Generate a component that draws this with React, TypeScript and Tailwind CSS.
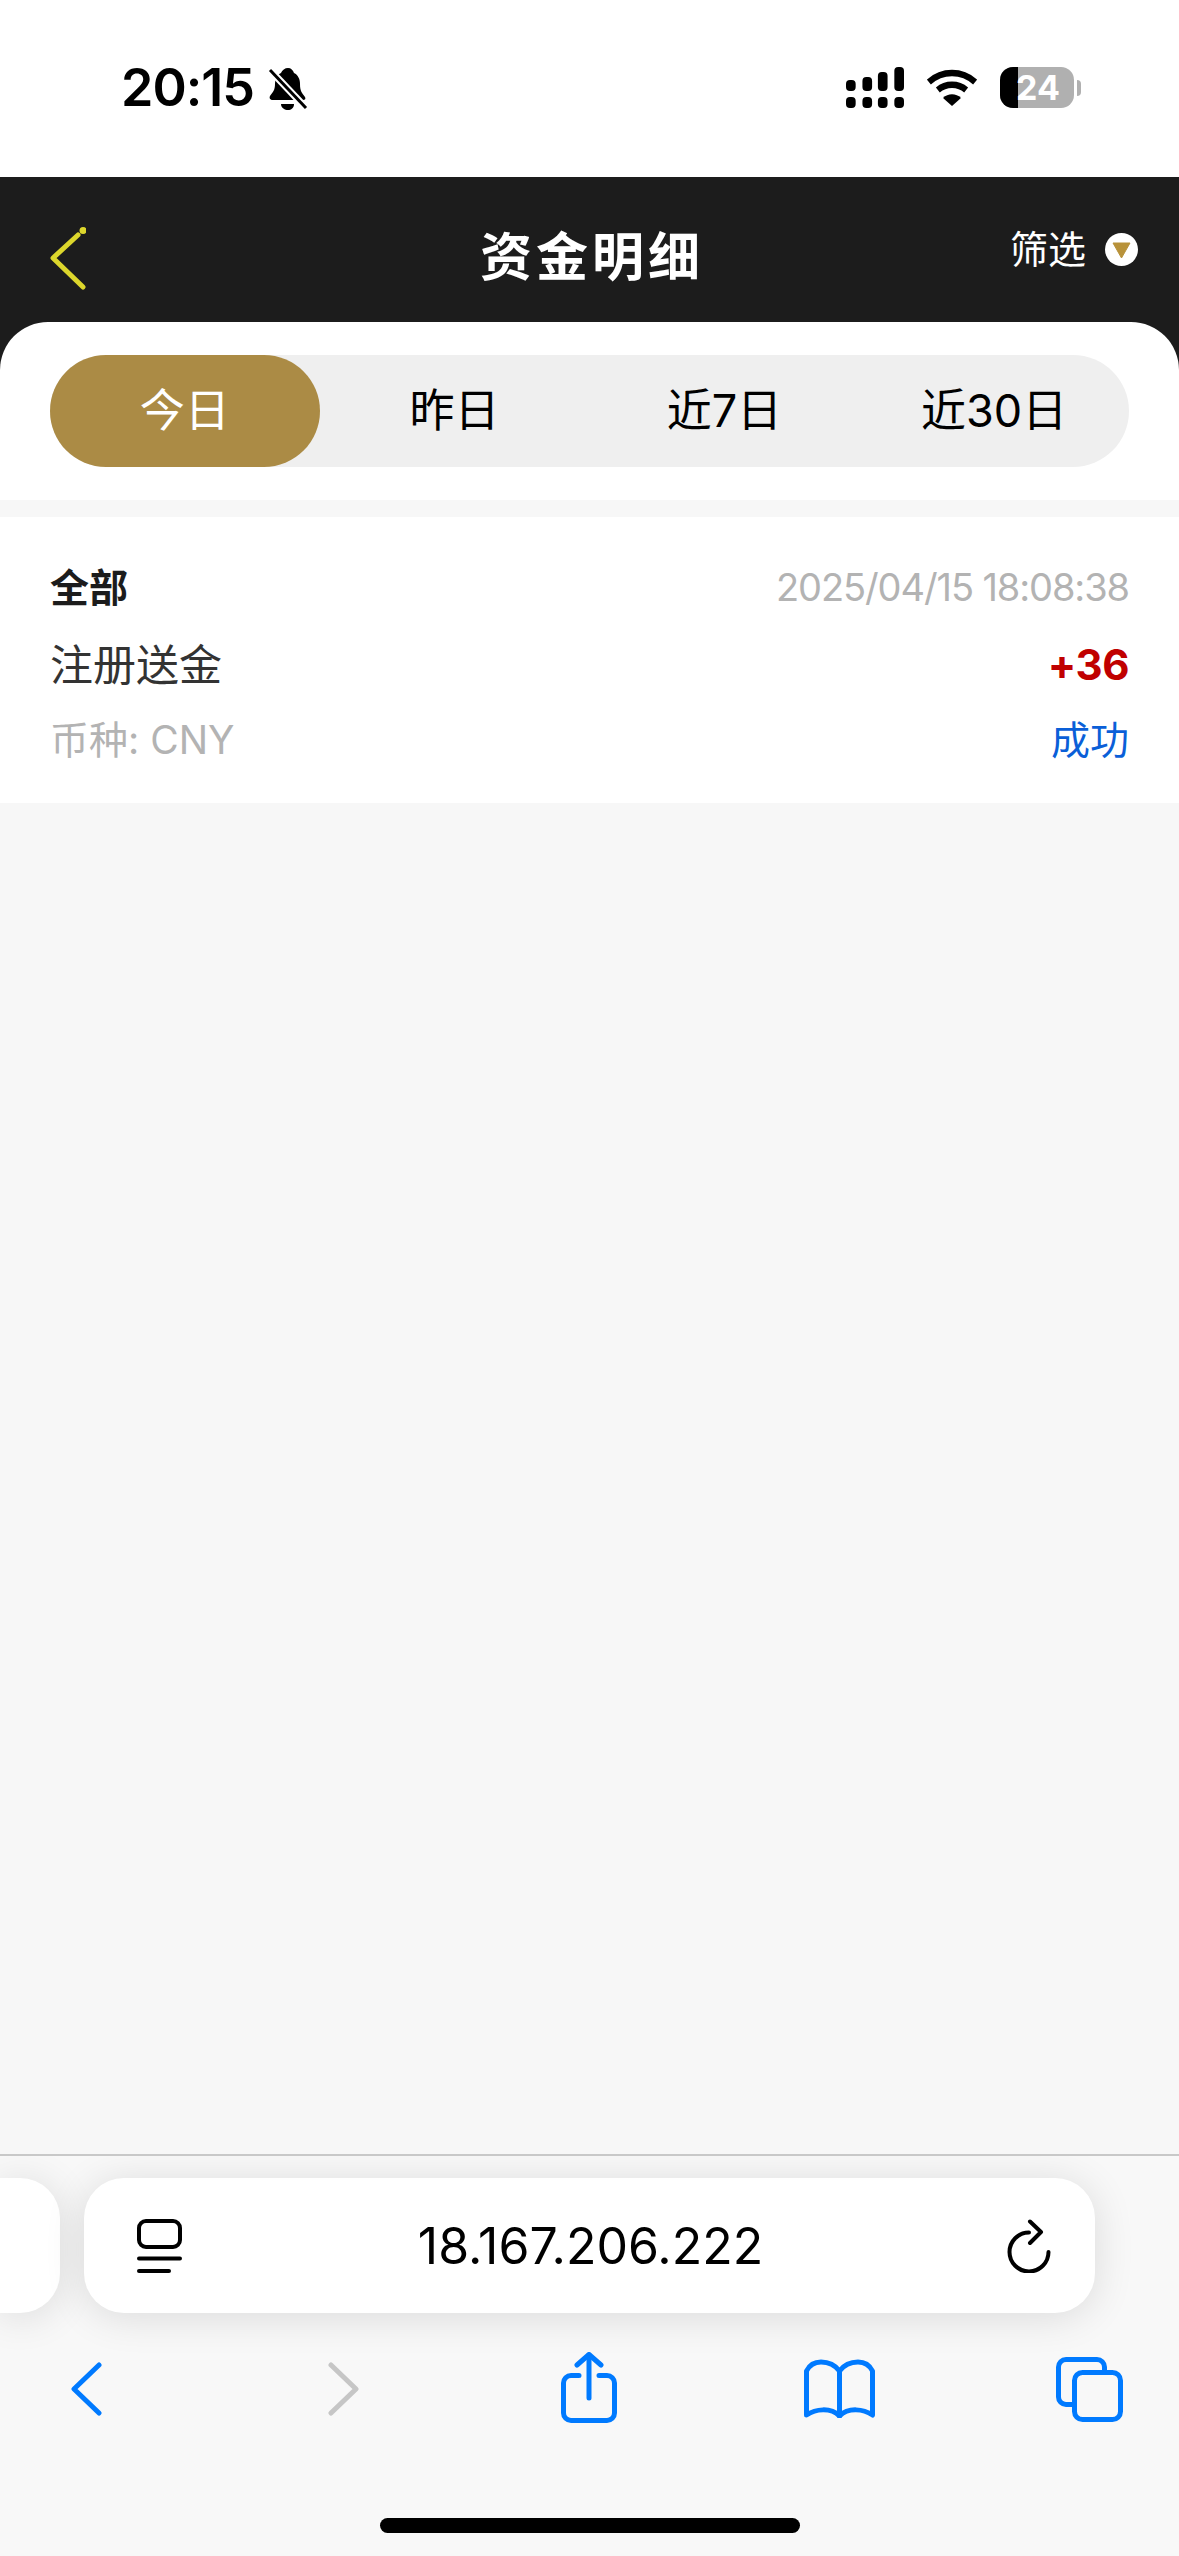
const tabs = ['今日', '昨日', '近7日', '近30日']

function StatusBar() {
  return (
    <div className="flex h-[177px] items-start justify-between bg-white pt-[60px] pl-[121px] pr-[98px]">
      <div className="flex items-center gap-[14px]">
        <span className="text-[52px] leading-[56px] font-semibold tracking-[-1px] text-black">20:15</span>
        <svg width="40" height="44" viewBox="0 0 40 44" className="mt-[2px]">
          <path d="M20 1c3 0 5 2 6 5 4 2 6 6 6 11 0 7 2 9 5 13 1 2 0 3-2 3H5c-3 0-4-2-3-4 3-4 5-6 5-12 0-5 2-9 6-11 1-3 4-5 7-5z" fill="#000" />
          <path d="M13 37h13c0 4-3 6-6 6s-7-2-7-6z" fill="#000" />
          <path d="M2 3 38 41" stroke="#fff" strokeWidth="7" />
          <path d="M2 3 38 41" stroke="#000" strokeWidth="3" />
        </svg>
      </div>
      <div className="flex items-start gap-[23px] pt-[7px]">
        <svg width="58" height="41" viewBox="0 0 60 41" preserveAspectRatio="none">
          <rect x="0" y="13" width="10" height="11" rx="4" />
          <rect x="17" y="10" width="10" height="14" rx="4" />
          <rect x="33" y="5" width="10" height="19" rx="4" />
          <rect x="50" y="0" width="10" height="24" rx="4" />
          <rect x="0" y="30" width="10" height="11" rx="4" />
          <rect x="17" y="30" width="10" height="11" rx="4" />
          <rect x="33" y="30" width="10" height="11" rx="4" />
          <rect x="50" y="30" width="10" height="11" rx="4" />
        </svg>
        <svg width="50" height="38" viewBox="0 0 53 38" preserveAspectRatio="none" className="mt-[2px]">
          <path d="M2 13C16 1 37 1 51 13" fill="none" stroke="#000" strokeWidth="6.5" />
          <path d="M11.500 21C20 14 33 14 41.500 21" fill="none" stroke="#000" strokeWidth="6.5" />
          <path d="M26.500 37 17 29c5-5 14-5 19 0z" fill="#000" />
        </svg>
        <div className="flex items-center gap-[3px]">
          <div className="relative h-[41px] w-[74px] overflow-hidden rounded-[13px] bg-[#b0b0b0]">
            <div className="h-full w-[18px] bg-black" />
            <span className="absolute inset-0 flex items-center justify-center pl-[2px] text-[34px] font-bold text-white">24</span>
          </div>
          <div className="h-[16px] w-[4px] rounded-r-full bg-[#b0b0b0]" />
        </div>
      </div>
    </div>
  )
}

function Header() {
  return (
    <div className="grid h-[145px] grid-cols-[1fr_auto_1fr] items-start pt-[48px] pl-[50px] pr-[41px]">
      <svg width="36" height="64" viewBox="0 0 36 64" className="mt-[2px]">
        <path d="M28 8 3 31l30 29" fill="none" stroke="#dcd62c" strokeWidth="5" strokeLinecap="round" strokeLinejoin="round" />
        <circle cx="33" cy="3.500" r="3.500" fill="#dcd62c" />
      </svg>
      <h1 className="mt-[3px] ml-[-4px] text-[52px] leading-[60px] font-bold tracking-[4px] text-white">资金明细</h1>
      <div className="flex items-center justify-end gap-[19px]">
        <span className="text-[38px] leading-[48px] text-white">筛选</span>
        <svg width="33" height="33" viewBox="0 0 33 33">
          <circle cx="16.500" cy="16.500" r="16.500" fill="#fff" />
          <path d="M8 10h17l-8.500 15z" fill="#b8923a" stroke="#b8923a" strokeWidth="1" strokeLinejoin="round" />
        </svg>
      </div>
    </div>
  )
}

function Tabs() {
  return (
    <div className="h-[178px] rounded-t-[48px] bg-white px-[50px] pt-[33px]">
      <div className="grid h-[112px] grid-cols-4 rounded-full bg-[#efefef]">
        {tabs.map((tab, index) => (
          <div
            key={tab}
            className={
              index === 0
                ? 'flex items-center justify-center rounded-full bg-[#ab8b45] text-[45px] text-white'
                : 'flex items-center justify-center text-[45px] text-black'
            }
          >
            {tab}
          </div>
        ))}
      </div>
    </div>
  )
}

function Record() {
  return (
    <div className="mt-[17px] flex h-[286px] flex-col gap-[20px] bg-white px-[50px] pt-[43px]">
      <div className="flex h-[56px] items-center justify-between">
        <span className="text-[39px] font-bold text-[#1c1c1c]">全部</span>
        <span className="mt-[-2px] text-[38px] tracking-[-1.1px] text-[#b3b3b3]">2025/04/15 18:08:38</span>
      </div>
      <div className="flex h-[56px] items-center justify-between">
        <span className="mt-[2px] text-[43px] text-[#333333]">注册送金</span>
        <span className="text-[42px] font-bold tracking-[-0.5px] text-[#c00000]">+36</span>
      </div>
      <div className="flex h-[56px] items-center justify-between">
        <span className="text-[39px] text-[#b3b3b3]">币种: CNY</span>
        <span className="text-[39px] text-[#0a5fd8]">成功</span>
      </div>
    </div>
  )
}

function AddressBar() {
  return (
    <div className="mt-[22px] flex gap-[24px]">
      <div className="h-[135px] w-[60px] rounded-r-[40px] bg-white shadow-[0_4px_40px_rgba(0,0,0,0.12)]" />
      <div className="flex h-[135px] w-[1011px] items-center justify-between rounded-[40px] bg-white pl-[53px] pr-[44px] shadow-[0_4px_40px_rgba(0,0,0,0.12)]">
        <svg width="45" height="54" viewBox="0 0 45 54" fill="none" stroke="#000" strokeWidth="4" strokeLinecap="round">
          <rect x="2" y="2" width="41" height="26" rx="7" />
          <path d="M2 39.500h41" />
          <path d="M2 52h30" />
        </svg>
        <span className="mr-[8px] text-[50px] leading-[60px] text-black">18.167.206.222</span>
        <svg width="44" height="54" viewBox="0 0 44 54" fill="none" stroke="#000" strokeWidth="4" strokeLinecap="round" strokeLinejoin="round">
          <path d="M41.500 33A19.500 19.500 0 1 1 22 13.500" />
          <path d="M23 2.500 34 13 23 24" />
        </svg>
      </div>
    </div>
  )
}

function Toolbar() {
  return (
    <div className="mt-[39px] flex h-[71px] items-start pl-[71px]">
      <svg width="31" height="54" viewBox="0 0 31 54" className="mt-[10px]" fill="none" stroke="#007aff" strokeWidth="5" strokeLinecap="round" strokeLinejoin="round">
        <path d="M28 3 3 27l25 24" />
      </svg>
      <svg width="31" height="54" viewBox="0 0 31 54" className="mt-[10px] ml-[226px]" fill="none" stroke="#c6c6c6" strokeWidth="5" strokeLinecap="round" strokeLinejoin="round">
        <path d="M3 3l25 24L3 51" />
      </svg>
      <svg width="56" height="71" viewBox="0 0 56 71" className="ml-[202px]" fill="none" stroke="#007aff" strokeWidth="5" strokeLinecap="round" strokeLinejoin="round">
        <path d="M18 23.500H10a7.500 7.500 0 0 0-7.500 7.500v30a7.500 7.500 0 0 0 7.500 7.500h36a7.500 7.500 0 0 0 7.500-7.500V31a7.500 7.500 0 0 0-7.500-7.500h-8" />
        <path d="M28 46V3" />
        <path d="M16 13 28 2.500 40 13" />
      </svg>
      <svg width="71" height="59" viewBox="0 0 71 59" className="mt-[7px] ml-[187px]" fill="none" stroke="#007aff" strokeWidth="5" strokeLinecap="round" strokeLinejoin="round">
        <path d="M35.500 12C31 6 24 3 17 3 10 3 5 7 2.500 12v44c9-6 24-8 33 1 9-9 24-7 33-1V12C66 7 61 3 54 3c-7 0-14 3-18.500 9z" />
        <path d="M35.500 12v45" />
      </svg>
      <svg width="67" height="65" viewBox="0 0 67 65" className="mt-[5px] ml-[181px]" fill="none" stroke="#007aff" strokeWidth="5" strokeLinecap="round" strokeLinejoin="round">
        <path d="M16 47.500h-6A7.500 7.500 0 0 1 2.500 40V10A7.500 7.500 0 0 1 10 2.500h31a7.500 7.500 0 0 1 7.500 7.500v3" />
        <rect x="18.500" y="15.500" width="46" height="47" rx="8" />
      </svg>
    </div>
  )
}

export default function App() {
  return (
    <div
      className="flex h-[2556px] w-[1179px] flex-col overflow-hidden bg-[#f7f7f7]"
      style={{ fontFamily: 'Inter, "Noto Sans CJK SC", sans-serif' }}
    >
      <StatusBar />
      <div className="bg-[#1c1c1c]">
        <Header />
        <Tabs />
      </div>
      <Record />
      <div className="flex-1" />
      <div className="h-[402px] overflow-hidden border-t-2 border-[#c8c8c8] bg-[#f8f8f8]">
        <AddressBar />
        <Toolbar />
        <div className="mt-[95px] flex justify-center">
          <div className="h-[15px] w-[420px] rounded-full bg-black" />
        </div>
      </div>
    </div>
  )
}
